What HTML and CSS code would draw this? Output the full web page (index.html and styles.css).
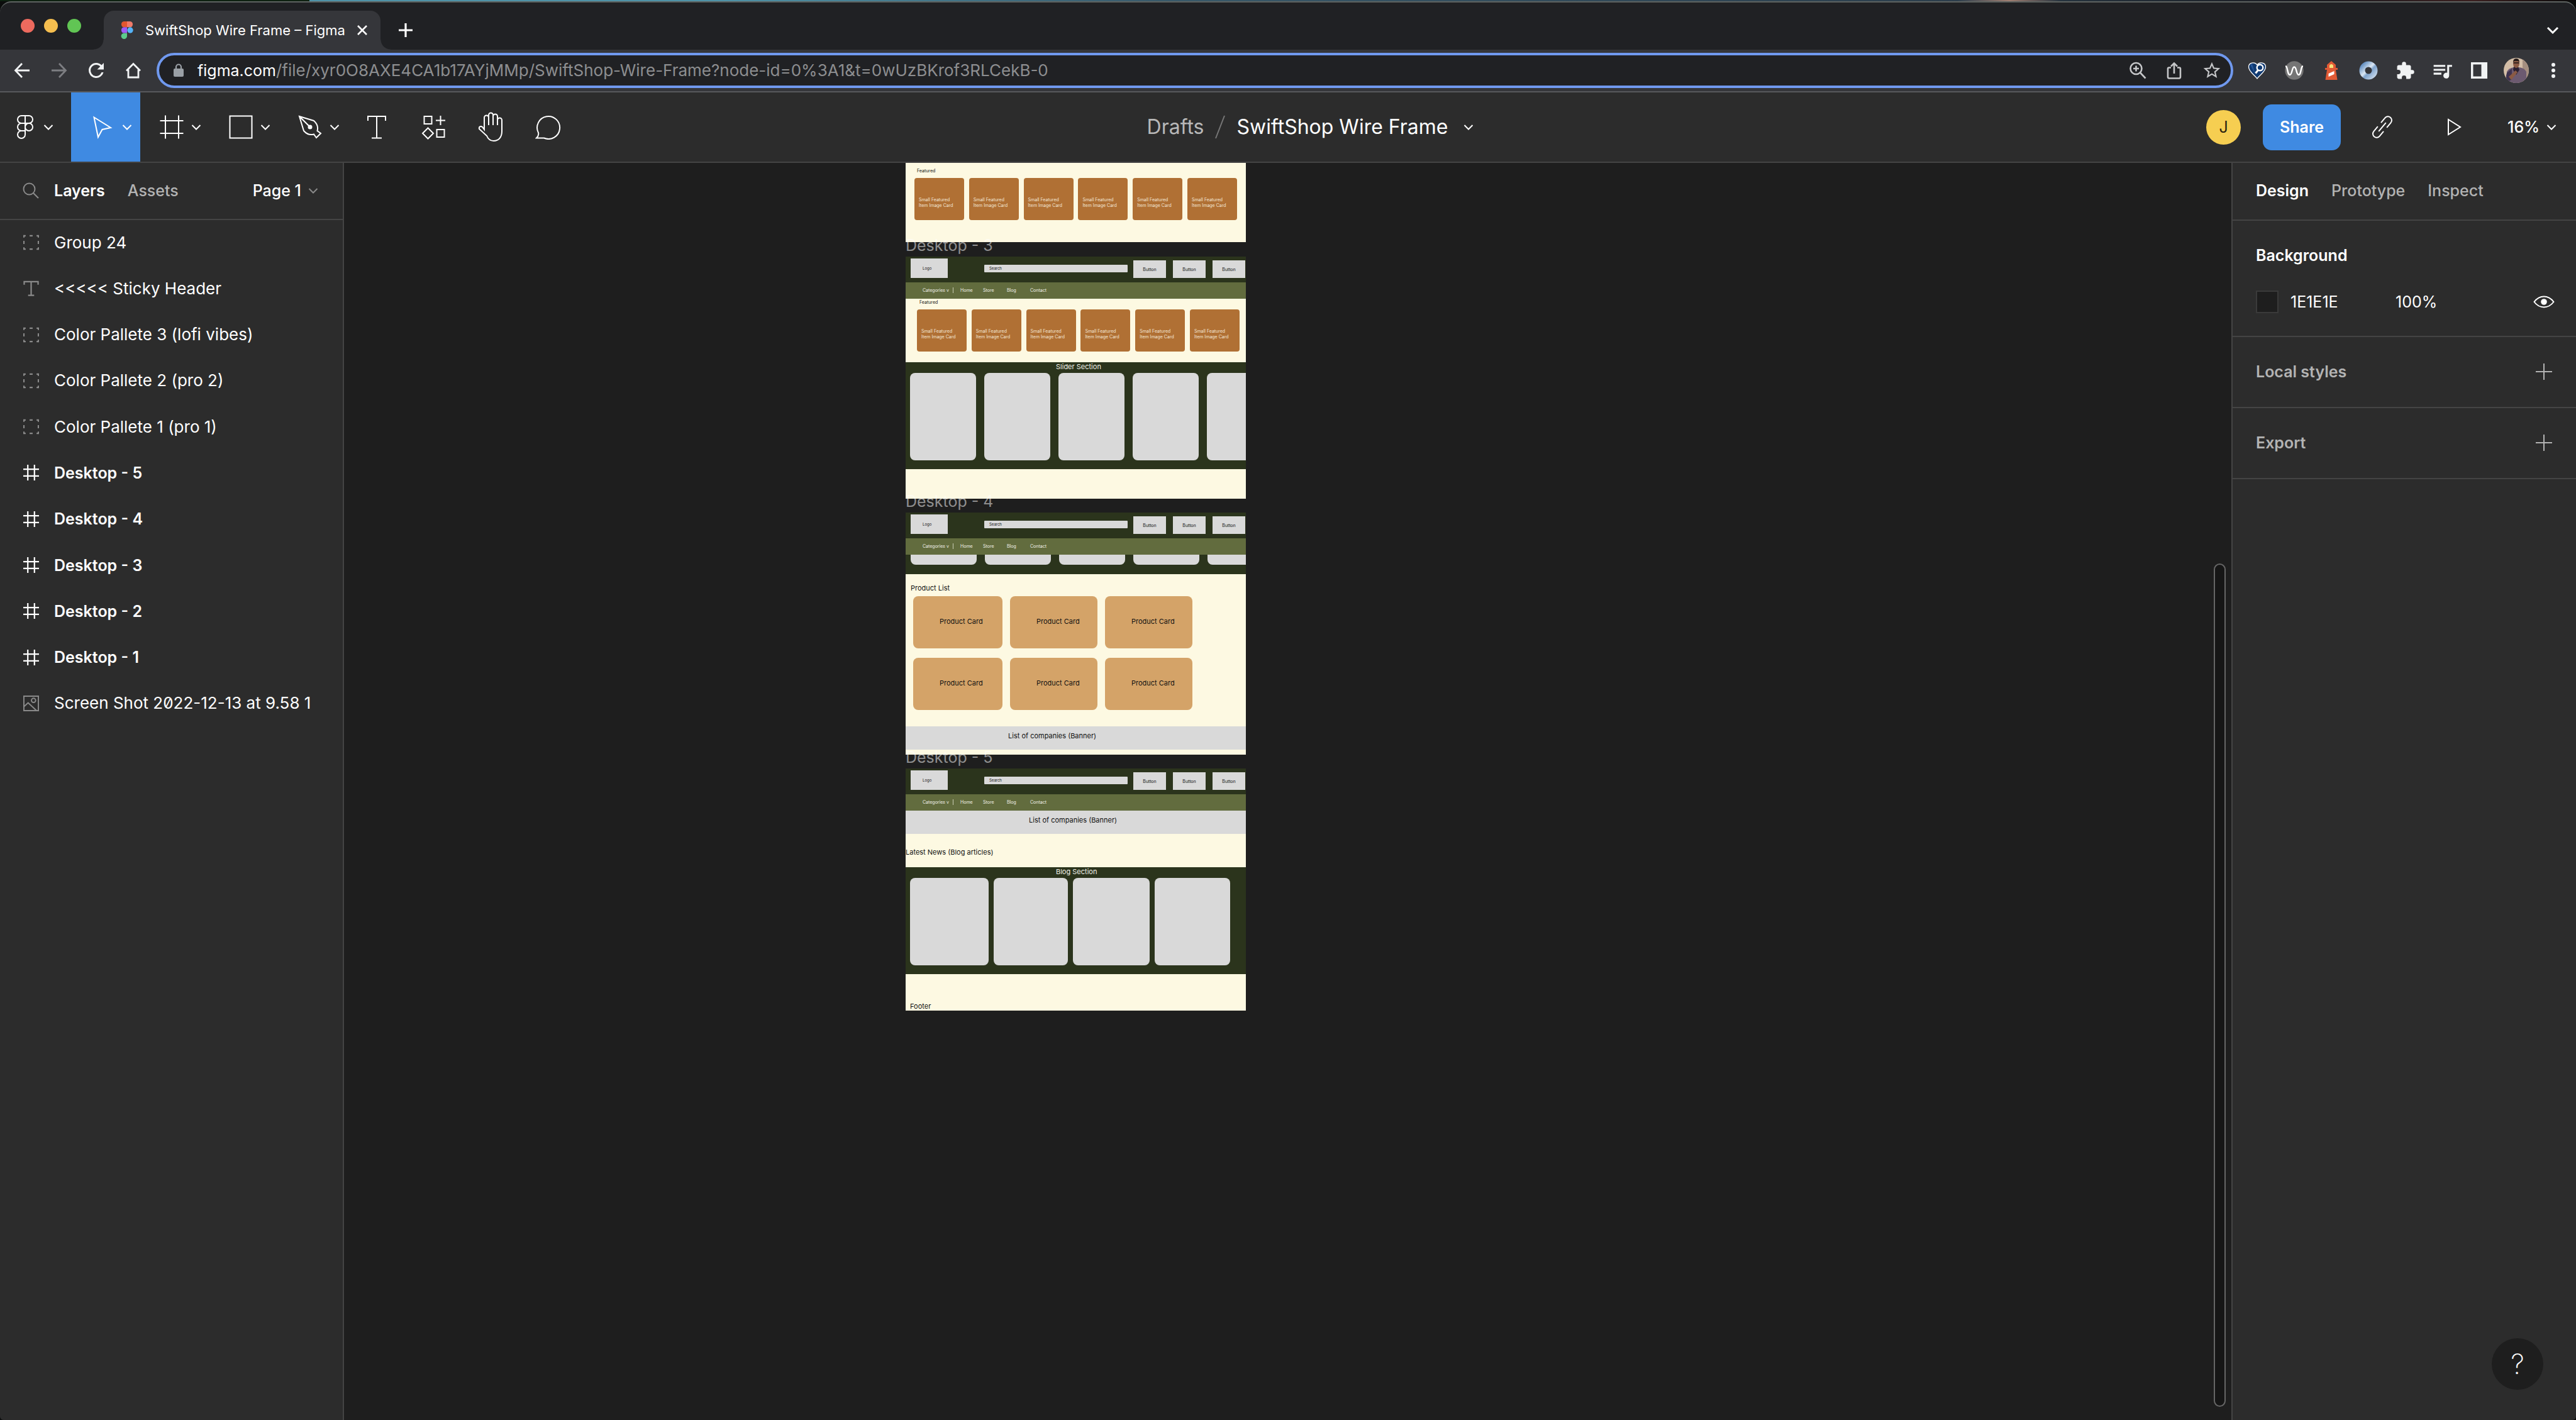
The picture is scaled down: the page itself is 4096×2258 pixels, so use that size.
FILE: index.html
```html
<!DOCTYPE html>
<html lang="en">
<head>
<meta charset="utf-8">
<title>SwiftShop Wire Frame – Figma</title>
<link rel="stylesheet" href="styles.css">
</head>
<body>
<svg class="defs" width="0" height="0" aria-hidden="true">
  <symbol id="chevron" viewBox="0 0 18 18"><path d="M2.500 6l6.500 6.500L15.500 6" fill="none" stroke="currentColor" stroke-width="2"/></symbol>
  <symbol id="frame" viewBox="0 0 40 40"><path d="M1.500 10h37M1.500 30h37M10 1.500v37M31 1.500v37" fill="none" stroke="currentColor" stroke-width="2"/></symbol>
  <symbol id="layer-frame" viewBox="0 0 26 26"><path d="M0 7.500h26M0 18.500h26M7.500 0v26M18.500 0v26" fill="none" stroke="currentColor" stroke-width="2.300"/></symbol>
  <symbol id="group" viewBox="0 0 26 26"><path d="M1 5V2h3M10.500 2h5M22 2h3v3M25 10.500v5M25 21v3h-3M15.500 24h-5M4 24H1v-3M1 15.500v-5" fill="none" stroke="currentColor" stroke-width="2.300"/></symbol>
  <symbol id="plus" viewBox="0 0 28 28"><path d="M14 1v26M1 14h26" fill="none" stroke="currentColor" stroke-width="2"/></symbol>
</svg>

<div class="wallpaper"></div>
<div class="window">
  <header class="tabstrip">
    <div class="lights"><span class="light red"></span><span class="light amber"></span><span class="light green"></span></div>
    <div class="tab">
      <svg width="20" height="28" viewBox="0 0 20 28"><path d="M10 0H5a4.700 4.700 0 0 0 0 9.300h5z" fill="#e2562f"/><path d="M10 0h5a4.700 4.700 0 0 1 0 9.300h-5z" fill="#ee7a6a"/><path d="M10 9.300H5a4.700 4.700 0 0 0 0 9.300h5z" fill="#9b5cf6"/><circle cx="15" cy="14" r="4.700" fill="#54b3f8"/><path d="M10 18.700H5A4.700 4.700 0 1 0 10 23.300z" fill="#5bcb8a"/></svg>
      <span class="tab-title">SwiftShop Wire Frame – Figma</span>
      <button class="bare" aria-label="Close tab"><svg width="18" height="18" viewBox="0 0 18 18"><path d="M2 2l14 14M16 2L2 16" stroke="#fff" stroke-width="2.600"/></svg></button>
    </div>
    <button class="bare new-tab" aria-label="New tab"><svg width="24" height="24" viewBox="0 0 24 24"><path d="M12 1v22M1 12h22" stroke="#fff" stroke-width="3.200"/></svg></button>
    <button class="bare tab-search" aria-label="Search tabs"><svg width="22" height="22" viewBox="0 0 22 22"><path d="M3 7l8 8 8-8" fill="none" stroke="#fff" stroke-width="3"/></svg></button>
  </header>

  <nav class="navbar" aria-label="Browser">
    <div class="nav-buttons">
      <button class="bare" aria-label="Back"><svg width="26" height="26" viewBox="0 0 26 26"><path d="M25 13H3M13 2L2.500 13 13 24" fill="none" stroke="#f1f3f4" stroke-width="2.800"/></svg></button>
      <button class="bare" aria-label="Forward"><svg width="26" height="26" viewBox="0 0 26 26"><path d="M1 13h22M13 2l10.500 11L13 24" fill="none" stroke="#7d7e82" stroke-width="2.800"/></svg></button>
      <button class="bare" aria-label="Reload"><svg width="36" height="36" viewBox="0 0 24 24"><path d="M17.650 6.350A7.960 7.960 0 0 0 12 4a8 8 0 1 0 7.730 10h-2.080A6 6 0 1 1 12 6c1.660 0 3.140.69 4.220 1.780L13 11h7V4z" fill="#f1f3f4"/></svg></button>
      <button class="bare" aria-label="Home"><svg width="26" height="26" viewBox="0 0 26 26"><path d="M5 11.500v12.500h16V11.500M2 13.500L13 2.500l11 11" fill="none" stroke="#f1f3f4" stroke-width="2.800"/></svg></button>
    </div>
    <div class="omnibox">
      <svg class="lock" width="16" height="22" viewBox="0 0 16 22"><rect y="8" width="16" height="13" rx="2" fill="#9aa0a6"/><path d="M4 9V5.500a4 4 0 0 1 8 0V9" fill="none" stroke="#9aa0a6" stroke-width="2.200"/></svg>
      <label for="url">figma.com</label>
      <input id="url" type="text" value="/file/xyr0O8AXE4CA1b17AYjMMp/SwiftShop-Wire-Frame?node-id=0%3A1&amp;t=0wUzBKrof3RLCekB-0">
      <div class="omni-actions">
        <button class="bare" aria-label="Zoom"><svg width="28" height="28" viewBox="0 0 28 28"><g fill="none" stroke="#c5c6c8" stroke-width="2.600"><circle cx="11.500" cy="11" r="9"/><path d="M18 17.500l8.500 9M7 11h9M11.500 6.500v9"/></g></svg></button>
        <button class="bare" aria-label="Share page"><svg width="24" height="28" viewBox="0 0 24 28"><path d="M7 9.500H4q-2 0-2 2V24q0 2.500 2 2.500h16q2 0 2-2.500V11.500q0-2-2-2h-3M12 19V3M7 7.500l5-5 5 5" fill="none" stroke="#c5c6c8" stroke-width="2.600"/></svg></button>
        <button class="bare" aria-label="Bookmark"><svg width="32" height="32" viewBox="0 0 24 24"><path d="M22 9.240l-7.190-.62L12 2 9.190 8.630 2 9.240l5.460 4.730L5.820 21 12 17.270 18.180 21l-1.630-7.030zM12 15.400l-3.760 2.270 1-4.280-3.320-2.880 4.380-.38L12 6.100l1.710 4.040 4.380.38-3.320 2.880 1 4.280z" fill="#c5c6c8"/></svg></button>
      </div>
    </div>
    <div class="extensions">
      <button class="bare" aria-label="Site inspector"><svg width="30" height="28" viewBox="0 0 30 28"><path d="M15 27C11 21 1.500 16 1.500 8.500 1.500 1 11 0 15 5c4-5 13.500-4 13.500 3.500C28.500 16 19 21 15 27z" fill="#103a72" stroke="#fff" stroke-width="1.300"/><path d="M4 5l8 15L7 3z" fill="#24569a"/><circle cx="19.500" cy="9.500" r="4.800" fill="none" stroke="#fff" stroke-width="2.400"/><path d="M16.500 13.500l-4 5" stroke="#fff" stroke-width="3"/></svg></button>
      <button class="bare" aria-label="Wave"><svg width="30" height="30" viewBox="0 0 30 30"><circle cx="15" cy="15" r="14.700" fill="#757575"/><path d="M1 8.500c2 0 2 1 3 5 1.500 7 2 8.500 4 8.500 4 0 3-12.500 7-12.500S18 22 22 22c2 0 2.500-1.500 4-8.500 1-4 1-5 3-5" fill="none" stroke="#fff" stroke-width="2.400"/></svg></button>
      <button class="bare" aria-label="Lighthouse"><svg width="22" height="30" viewBox="0 0 22 30"><path d="M11 0l7 6v5h3v3h-3l2.500 16h-19L4 14H1v-3h3V6z" fill="#e05a35"/><path d="M8 11V7q3-4 6 0v4z" fill="#f7e37a"/><path d="M6.500 20l9-4v5l-9 4z" fill="#fff"/></svg></button>
      <button class="bare" aria-label="Ring"><svg width="30" height="30" viewBox="0 0 30 30"><defs><linearGradient id="ring" x1="0" y1="0" x2="1" y2="1"><stop offset="0" stop-color="#5f8cc0"/><stop offset=".45" stop-color="#dbe7f3"/><stop offset=".6" stop-color="#7fa3cc"/><stop offset="1" stop-color="#c3d5e8"/></linearGradient></defs><circle cx="15" cy="15" r="10" fill="none" stroke="url(#ring)" stroke-width="9"/></svg></button>
      <button class="bare" aria-label="Extensions"><svg width="31" height="31" viewBox="0 0 24 24"><path d="M20.500 11H19V7c0-1.100-.9-2-2-2h-4V3.500a2.500 2.500 0 0 0-5 0V5H4c-1.100 0-2 .9-2 2v3.800h1.500a2.700 2.700 0 0 1 0 5.400H2V20c0 1.100.9 2 2 2h3.800v-1.500a2.700 2.700 0 0 1 5.400 0V22H17c1.100 0 2-.9 2-2v-4h1.500a2.500 2.500 0 0 0 0-5z" fill="#f1f3f4"/></svg></button>
      <button class="bare" aria-label="Media"><svg width="37" height="37" viewBox="0 0 24 24"><path d="M15 6H3v2h12zm0 4H3v2h12zM3 16h8v-2H3zM17 6v8.180A3 3 0 1 0 19 17V8h3V6z" fill="#f1f3f4"/></svg></button>
      <button class="bare" aria-label="Side panel"><svg width="26" height="26" viewBox="0 0 26 26"><path d="M0 0h26v26H0zM3.500 3.500v19h13v-19z" fill="#f1f3f4" fill-rule="evenodd"/></svg></button>
      <button class="bare" aria-label="Profile"><svg width="40" height="40" viewBox="0 0 40 40"><defs><clipPath id="face"><circle cx="20" cy="20" r="20"/></clipPath></defs><g clip-path="url(#face)"><path d="M0 0h40v40H0z" fill="#d3bda6"/><path d="M30 0h10v40H30z" fill="#a58f80"/><path d="M5 40V22q3-6 12-7h7q9 1 12 7v18z" fill="#6c5a70"/><path d="M5 24q-3 8 2 14l6-4V17z" fill="#3f3350"/><path d="M16 14h7l2 5-5 8-5-8z" fill="#2b2030"/><ellipse cx="20" cy="9" rx="5" ry="7" fill="#8a5a44"/><path d="M15 7q0-6 5-6t5 6l-2-2h-6z" fill="#241a18"/><path d="M15.500 8h9" stroke="#1c1414" stroke-width="1.500"/><path d="M8 30l11-10 3 3-10 12z" fill="#8a5a44"/></g></svg></button>
      <button class="bare" aria-label="Menu"><svg width="8" height="26" viewBox="0 0 8 26"><g fill="#f1f3f4"><circle cx="4" cy="4" r="3"/><circle cx="4" cy="13" r="3"/><circle cx="4" cy="22" r="3"/></g></svg></button>
    </div>
  </nav>

  <div class="toolbar">
    <div class="tools">
      <button class="tool main-menu" aria-label="Main menu"><svg width="28" height="40" viewBox="-1 -1 28 40"><path d="M13 1H7a6 6 0 0 0 0 12h6zM13 1h6a6 6 0 0 1 0 12h-6zM13 13H7a6 6 0 0 0 0 12h6zM13 25H7a6 6 0 1 0 6 6z" fill="none" stroke="#fff" stroke-width="2"/><circle cx="19" cy="19" r="6" fill="none" stroke="#fff" stroke-width="2"/></svg><svg class="chev"><use href="#chevron"/></svg></button>
      <button class="tool menu-tool active" aria-label="Move"><svg width="40" height="40" viewBox="0 0 40 40"><path d="M6.500 4.500L33 21l-13.500 3L13 36z" fill="none" stroke="#fff" stroke-width="2"/></svg><svg class="chev"><use href="#chevron"/></svg></button>
      <button class="tool menu-tool" aria-label="Frame"><svg width="40" height="40"><use href="#frame"/></svg><svg class="chev"><use href="#chevron"/></svg></button>
      <button class="tool menu-tool" aria-label="Rectangle"><svg width="40" height="40" viewBox="0 0 40 40"><rect x="2.500" y="2.500" width="35" height="35" fill="none" stroke="#fff" stroke-width="2"/></svg><svg class="chev"><use href="#chevron"/></svg></button>
      <button class="tool menu-tool" aria-label="Pen"><svg width="40" height="40" viewBox="0 0 40 40"><path d="M3 3l23 7q8 7 5.500 16L37 30l-7 7-4-5.500q-9 2.500-16-5.500zM3 3l15 15" fill="none" stroke="#fff" stroke-width="2"/><circle cx="20" cy="20" r="3.500" fill="#fff"/></svg><svg class="chev"><use href="#chevron"/></svg></button>
      <button class="tool single" aria-label="Text"><svg width="40" height="40" viewBox="0 0 40 40"><path d="M6 10V3h28v7M20 3v34M12 37.500h16" fill="none" stroke="#fff" stroke-width="2"/></svg></button>
      <button class="tool single" aria-label="Resources"><svg width="40" height="40" viewBox="0 0 40 40"><path d="M4.500 3h12v12h-12zM24.500 24h12v12h-12zM10.500 21.500l8.500 8.500-8.500 8.500L2 30zM30.500 2v15M23 9.500h15" fill="none" stroke="#fff" stroke-width="2"/></svg></button>
      <button class="tool single" aria-label="Hand"><svg width="42" height="48" viewBox="0 0 42 48"><path d="M17 21V5a3.500 3.500 0 0 1 7 0v16M24 21V7a3.500 3.500 0 0 1 7 0v14M31 21v-8a3.500 3.500 0 0 1 7 0v18c0 9-5 15-13 15-6 0-9-3-11-8L2 27c-1-4 3-5 5-3l3 4V9a3.500 3.500 0 0 1 7 0" fill="none" stroke="#fff" stroke-width="2"/></svg></button>
      <button class="tool single" aria-label="Comment"><svg width="42" height="40" viewBox="0 0 42 40"><path d="M2 37.500c3-3 4-5 3-8.500a18 18 0 1 1 9 8.500z" fill="none" stroke="#fff" stroke-width="2"/></svg></button>
    </div>
    <div class="file-title">
      <a href="#drafts">Drafts</a>
      <svg width="18" height="38" viewBox="0 0 18 38"><path d="M2 37L16 1" stroke="#777" stroke-width="2"/></svg>
      <button class="bare file-name">SwiftShop Wire Frame <svg class="chev"><use href="#chevron"/></svg></button>
    </div>
    <div class="actions">
      <span class="user">J</span>
      <button class="share">Share</button>
      <button class="bare link" aria-label="Copy link"><svg width="36" height="36" viewBox="0 0 36 36"><g transform="rotate(40 18 18)" fill="none" stroke="#fff" stroke-width="2"><path d="M12 14V4a6 6 0 0 1 12 0v10M12 22v10a6 6 0 0 0 12 0V22M18 9v18"/></g></svg></button>
      <button class="bare present" aria-label="Present"><svg width="24" height="30" viewBox="0 0 24 30"><path d="M2 3v24l19-12z" fill="none" stroke="#fff" stroke-width="2"/></svg></button>
      <button class="bare zoom">16% <svg class="chev"><use href="#chevron"/></svg></button>
    </div>
  </div>

  <main class="workspace">
    <aside class="panel left">
      <div class="panel-head">
        <button class="bare search" aria-label="Search layers"><svg width="26" height="26" viewBox="0 0 26 26"><circle cx="10.500" cy="10.500" r="9" fill="none" stroke="#8a8a8a" stroke-width="2"/><path d="M17 17l8 8" stroke="#8a8a8a" stroke-width="2.200"/></svg></button>
        <button class="bare on">Layers</button>
        <button class="bare off">Assets</button>
        <button class="bare page">Page 1 <svg class="chev dim"><use href="#chevron"/></svg></button>
      </div>
      <ul class="layers">
        <li><svg class="dim"><use href="#group"/></svg>Group 24</li>
        <li><svg class="dim" viewBox="0 0 26 26"><path d="M1.500 7V2h23v5M13 2v22M8 24.500h10" fill="none" stroke="currentColor" stroke-width="2.300"/></svg>&lt;&lt;&lt;&lt;&lt; Sticky Header</li>
        <li><svg class="dim"><use href="#group"/></svg>Color Pallete 3 (lofi vibes)</li>
        <li><svg class="dim"><use href="#group"/></svg>Color Pallete 2 (pro 2)</li>
        <li><svg class="dim"><use href="#group"/></svg>Color Pallete 1 (pro 1)</li>
        <li class="top"><svg><use href="#layer-frame"/></svg>Desktop - 5</li>
        <li class="top"><svg><use href="#layer-frame"/></svg>Desktop - 4</li>
        <li class="top"><svg><use href="#layer-frame"/></svg>Desktop - 3</li>
        <li class="top"><svg><use href="#layer-frame"/></svg>Desktop - 2</li>
        <li class="top"><svg><use href="#layer-frame"/></svg>Desktop - 1</li>
        <li><svg class="dim" viewBox="0 0 26 26"><path d="M1 1h24v24H1zM1.500 18L8 12l14 13" fill="none" stroke="currentColor" stroke-width="2"/><circle cx="17" cy="8" r="3.500" fill="none" stroke="currentColor" stroke-width="2"/></svg><span>Screen Shot 2<span class="slashed">0</span>22-12-13 at 9.58 1</span></li>
      </ul>
    </aside>

    <section class="canvas" aria-label="Canvas">
      <article class="artboard board-2">
        <section class="featured roomy">
          <h3 class="small-title">Featured</h3>
          <div class="item-row"><p>Small Featured<br>Item Image Card</p><p>Small Featured<br>Item Image Card</p><p>Small Featured<br>Item Image Card</p><p>Small Featured<br>Item Image Card</p><p>Small Featured<br>Item Image Card</p><p>Small Featured<br>Item Image Card</p></div>
        </section>
      </article>

      <article class="artboard board-3">
        <div class="site-head"><span class="logo">Logo</span><span class="site-search">Search</span><span class="site-btn">Button</span><span class="site-btn">Button</span><span class="site-btn">Button</span></div>
        <div class="site-nav"><span class="cat">Categories v</span><span class="home">Home</span><span class="store">Store</span><span class="blog">Blog</span><span>Contact</span></div>
        <section class="featured">
          <h3 class="small-title">Featured</h3>
          <div class="item-row"><p>Small Featured<br>Item Image Card</p><p>Small Featured<br>Item Image Card</p><p>Small Featured<br>Item Image Card</p><p>Small Featured<br>Item Image Card</p><p>Small Featured<br>Item Image Card</p><p>Small Featured<br>Item Image Card</p></div>
        </section>
        <section class="slider">
          <h3>Slider Section</h3>
          <div class="slides"><i></i><i></i><i></i><i></i><i></i></div>
        </section>
      </article>
      <h2 class="label label-3">Desktop - 3</h2>

      <article class="artboard board-4">
        <div class="site-head"><span class="logo">Logo</span><span class="site-search">Search</span><span class="site-btn">Button</span><span class="site-btn">Button</span><span class="site-btn">Button</span></div>
        <div class="site-nav"><span class="cat">Categories v</span><span class="home">Home</span><span class="store">Store</span><span class="blog">Blog</span><span>Contact</span></div>
        <div class="slides cut"><i></i><i></i><i></i><i></i><i></i></div>
        <section class="products">
          <h3>Product List</h3>
          <div class="product-grid"><p>Product Card</p><p>Product Card</p><p>Product Card</p><p>Product Card</p><p>Product Card</p><p>Product Card</p></div>
        </section>
        <div class="banner">List of companies (Banner)</div>
      </article>
      <h2 class="label label-4">Desktop - 4</h2>

      <article class="artboard board-5">
        <div class="site-head"><span class="logo">Logo</span><span class="site-search">Search</span><span class="site-btn">Button</span><span class="site-btn">Button</span><span class="site-btn">Button</span></div>
        <div class="site-nav"><span class="cat">Categories v</span><span class="home">Home</span><span class="store">Store</span><span class="blog">Blog</span><span>Contact</span></div>
        <div class="banner later">List of companies (Banner)</div>
        <h3 class="news">Latest News (Blog articles)</h3>
        <section class="slider">
          <h3>Blog Section</h3>
          <div class="posts"><i></i><i></i><i></i><i></i></div>
        </section>
        <footer class="site-foot">Footer</footer>
      </article>
      <h2 class="label label-5">Desktop - 5</h2>

      <div class="scroll-thumb"></div>
    </section>

    <aside class="panel right">
      <div class="panel-head">
        <button class="bare on">Design</button>
        <button class="bare off">Prototype</button>
        <button class="bare off">Inspect</button>
      </div>
      <section class="background">
        <h2>Background</h2>
        <div class="fill-row">
          <span class="swatch"></span>
          <input class="hex" type="text" aria-label="Color" value="1E1E1E">
          <input class="opacity" type="text" aria-label="Opacity" value="100%">
          <button class="bare eye" aria-label="Toggle visibility"><svg width="34" height="20" viewBox="0 0 34 20"><path d="M1.500 10Q8 1.500 17 1.500T32.500 10Q26 18.500 17 18.500T1.500 10z" fill="none" stroke="#fff" stroke-width="2"/><circle cx="17" cy="10" r="4.800" fill="#fff"/></svg></button>
        </div>
      </section>
      <section class="prop"><h2>Local styles</h2><button class="bare" aria-label="Add style"><svg width="28" height="28"><use href="#plus"/></svg></button></section>
      <section class="prop"><h2>Export</h2><button class="bare" aria-label="Add export"><svg width="28" height="28"><use href="#plus"/></svg></button></section>
      <button class="help" aria-label="Help">?</button>
    </aside>
  </main>
</div>
</body>
</html>
```
FILE: styles.css
```css
* { box-sizing: border-box; }
body {
  margin: 0;
  min-height: 100vh;
  display: flex;
  flex-direction: column;
  background: #0b0d0c;
  color: #fff;
  font-family: Inter, "Liberation Sans", sans-serif;
  font-size: 25px;
  line-height: 32px;
}
h2, h3, p, ul { margin: 0; padding: 0; font-size: inherit; font-weight: inherit; }
ul { list-style: none; }
svg { display: block; flex: none; }
button, input { font: inherit; color: inherit; }
input { background: none; border: 0; padding: 0; outline: 0; min-width: 0; }
a { color: inherit; text-decoration: none; }
.defs { position: absolute; }
.bare { background: none; border: 0; padding: 0; display: flex; align-items: center; }
.chev { width: 18px; height: 18px; }

.wallpaper {
  height: 2px;
  background: linear-gradient(90deg, #0d2110 12%, #4f93a8 12%, #4f93a8 28%, #38596a 45%, #2b3d4b 76%, #a07f72 78%, #24323d 80%, #1b1b20 90%, #3a1f1f 96%, #0a0a0a);
}
.window {
  flex: 1;
  display: flex;
  flex-direction: column;
  border-top: 2px solid #5d6260;
  border-radius: 18px 18px 6px 6px;
  overflow: hidden;
  background: #202124;
}

/* Browser chrome */
.tabstrip { display: flex; align-items: flex-end; height: 75px; padding-right: 26px; }
.lights { display: flex; gap: 15px; width: 165px; padding-left: 33px; padding-bottom: 27px; }
.light { width: 22px; height: 22px; border-radius: 50%; }
.red { background: #ed6a5e; }
.amber { background: #f5be4f; }
.green { background: #61c554; }
.tab {
  position: relative;
  display: flex;
  align-items: center;
  width: 440px;
  height: 62px;
  padding: 0 20px 0 27px;
  border-radius: 16px 16px 0 0;
  background: #35363a;
}
.tab::before, .tab::after {
  content: "";
  position: absolute;
  bottom: 0;
  width: 16px;
  height: 16px;
}
.tab::before { right: 100%; background: radial-gradient(circle at 0 0, transparent 15px, #35363a 16px); }
.tab::after { left: 100%; background: radial-gradient(circle at 100% 0, transparent 15px, #35363a 16px); }
.tab-title { flex: 1; padding-left: 19px; font-size: 22px; white-space: nowrap; }
.new-tab { margin-left: 28px; height: 62px; }
.tab-search { margin-left: auto; height: 62px; }
.navbar { display: flex; align-items: center; height: 68px; background: #35363a; border-bottom: 2px solid #57595c; }
.nav-buttons { display: grid; grid-template-columns: repeat(4, 1fr); width: 249px; padding: 0 8px 0 5px; }
.nav-buttons .bare, .extensions .bare { justify-content: center; }
.omnibox {
  flex: 1;
  display: flex;
  align-items: center;
  height: 56px;
  padding: 0 14px 0 23px;
  border: 4px solid #7099ef;
  border-radius: 28px;
  background: #202124;
}
.omnibox label { padding-left: 22px; }
.omnibox input { flex: 1; color: #8d8e90; font-size: 26px; }
.omni-actions { display: flex; align-items: center; justify-content: space-between; width: 148px; }
.extensions { display: grid; grid-template-columns: repeat(9, 1fr); align-items: center; width: 545px; padding: 0 7px 0 9px; }

/* Editor toolbar */
.toolbar {
  display: grid;
  grid-template-columns: 1fr auto 1fr;
  height: 112px;
  background: #2c2c2c;
  border-bottom: 2px solid #444;
}
.tools { display: flex; }
.tool { display: flex; align-items: center; padding: 0; border: 0; background: none; }
.main-menu { width: 113px; padding-left: 26px; gap: 14px; }
.menu-tool { width: 110px; padding-left: 30px; gap: 10px; }
.active { background: #3f8ae2; }
.single { width: 91px; justify-content: center; }
.file-title { display: flex; align-items: center; gap: 17px; padding-left: 72px; font-size: 32px; }
.file-title a { color: #b8b8b8; }
.file-name { gap: 24px; }
.actions { display: flex; align-items: center; justify-content: flex-end; padding-right: 30px; }
.user {
  display: grid;
  place-items: center;
  width: 55px;
  height: 55px;
  margin-right: 35px;
  border-radius: 50%;
  background: #f6ce51;
  color: #2a2410;
}
.share { width: 124px; height: 73px; padding: 0; border: 0; border-radius: 14px; background: #3f8ae2; font-weight: 600; }
.link { width: 132px; justify-content: center; }
.present { width: 98px; justify-content: center; }
.zoom { gap: 10px; margin-left: 35px; font-weight: 500; }

/* Workspace */
.workspace { flex: 1; display: grid; grid-template-columns: 547px 1fr 548px; }
.panel { display: flex; flex-direction: column; background: #2c2c2c; }
.left { border-right: 2px solid #444; }
.right { position: relative; border-left: 2px solid #444; }
.panel-head { display: flex; align-items: center; gap: 36px; height: 92px; padding: 0 37px 2px; border-bottom: 2px solid #444; }
.on { font-weight: 600; }
.off { color: #b3b3b3; font-weight: 500; }
.search { width: 14px; }
.left .panel-head { height: 91px; padding: 0 38px 2px 36px; }
.page { margin-left: auto; gap: 10px; font-weight: 500; }
.dim { color: #8a8a8a; }
.layers { display: grid; grid-auto-rows: 1fr; height: 806px; font-size: 26px; }
.layers li { display: flex; align-items: center; gap: 24px; padding: 0 0 2px 37px; white-space: nowrap; }
.layers li > svg { width: 25px; height: 25px; }
.layers .top { font-size: 25px; font-weight: 600; }
.slashed { font-feature-settings: "zero"; }

.background { padding: 19px 34px 18px 37px; border-bottom: 2px solid #444; }
.background h2 { line-height: 73px; font-weight: 600; }
.fill-row { display: flex; align-items: center; height: 73px; }
.swatch { width: 36px; height: 36px; border: 2px solid #3a3a3a; background: #1e1e1e; }
.hex { width: 167px; margin-left: 19px; }
.opacity { width: 120px; }
.eye { margin-left: auto; }
.prop {
  display: flex;
  align-items: center;
  justify-content: space-between;
  height: 113px;
  padding: 0 37px 2px;
  border-bottom: 2px solid #444;
  color: #b3b3b3;
  font-weight: 600;
}
.help {
  position: absolute;
  right: 52px;
  bottom: 48px;
  width: 82px;
  height: 82px;
  padding: 0;
  border: 0;
  border-radius: 50%;
  background: #1e1e1e;
  font-size: 44px;
  font-weight: 200;
}

/* Canvas */
.canvas { position: relative; overflow: hidden; background: #1e1e1e; }
.scroll-thumb {
  position: absolute;
  right: 9px;
  top: 637px;
  bottom: 21px;
  width: 19px;
  border: 2px solid #666;
  border-radius: 10px;
  background: #161616;
}
.artboard {
  position: absolute;
  left: 893px;
  width: 541px;
  height: 385px;
  overflow: hidden;
  background: #fdf9e2;
  color: #111;
  font-size: 7px;
  line-height: 9px;
}
.board-2 { top: 0; height: 126px; }
.board-3 { top: 149px; }
.board-4 { top: 556px; }
.board-5 { top: 963px; }
.label { position: absolute; left: 893px; color: rgba(255, 255, 255, .5); }
.label-3 { top: 115px; }
.label-4 { top: 522px; }
.label-5 { top: 929px; }

.site-head { display: flex; align-items: flex-start; height: 41px; padding-left: 8px; background: #2b341c; }
.site-head span { flex: none; background: #d9d9d9; }
.logo { width: 59px; height: 31px; margin: 3px 58px 0 0; padding-left: 19px; font-size: 6px; line-height: 32px; }
.site-search { width: 228px; height: 12px; margin: 13px 9px 0 0; padding-left: 8px; font-size: 6px; line-height: 12px; border-radius: 1px; }
.site-btn { width: 52px; height: 28px; margin: 6px 11px 0 0; text-align: center; line-height: 29px; }
.site-nav { display: flex; align-items: center; height: 26px; padding: 0 0 2px 27px; background: #626c3e; color: #f2f2ea; }
.cat { width: 49px; margin-right: 11px; border-right: 1px solid #c9ccb4; }
.home { width: 36px; }
.store { width: 38px; }
.blog { width: 37px; }

.featured { height: 101px; padding: 1px 10px 0 18px; }
.roomy { height: 126px; padding: 8px 14px 0; }
.small-title { padding-left: 4px; }
.item-row { display: flex; justify-content: space-between; margin-top: 7px; }
.item-row p { width: 79px; height: 67px; padding: 30px 0 0 7px; border-radius: 4px; background: #b07034; color: #f3e6d6; white-space: nowrap; }
.slider { height: 170px; padding: 0 0 0 7px; background: #2b341c; }
.slider h3 { padding-left: 232px; color: #f2f2ea; font-size: 11px; line-height: 14px; }
.slides, .posts { display: flex; gap: 13px; margin-top: 3px; }
.slides i, .posts i { flex: none; width: 105px; height: 139px; border-radius: 8px; background: #d9d9d9; }
.posts { display: grid; grid-template-columns: 125px 118px 122px 120px; gap: 8px; }
.posts i { width: auto; }
.cut { height: 31px; margin: 0; padding-left: 8px; background: #2b341c; }
.cut i { height: 16px; border-radius: 0 0 8px 8px; }

.products { height: 242px; padding: 15px 12px 0; }
.products h3, .banner, .news, .site-foot { font-size: 11px; line-height: 14px; }
.products h3 { margin-left: -4px; }
.product-grid { display: grid; grid-template-columns: 142px 139px 139px; gap: 15px 12px; margin-top: 6px; }
.product-grid p { height: 83px; padding-left: 42px; border-radius: 8px; background: #d4a368; font-size: 11px; line-height: 81px; }
.banner { height: 37px; padding: 8px 0 0 163px; background: #d9d9d9; }
.later { padding-left: 196px; }
.news { height: 53px; padding-top: 22px; }
.site-foot { padding: 44px 0 0 7px; }
```
